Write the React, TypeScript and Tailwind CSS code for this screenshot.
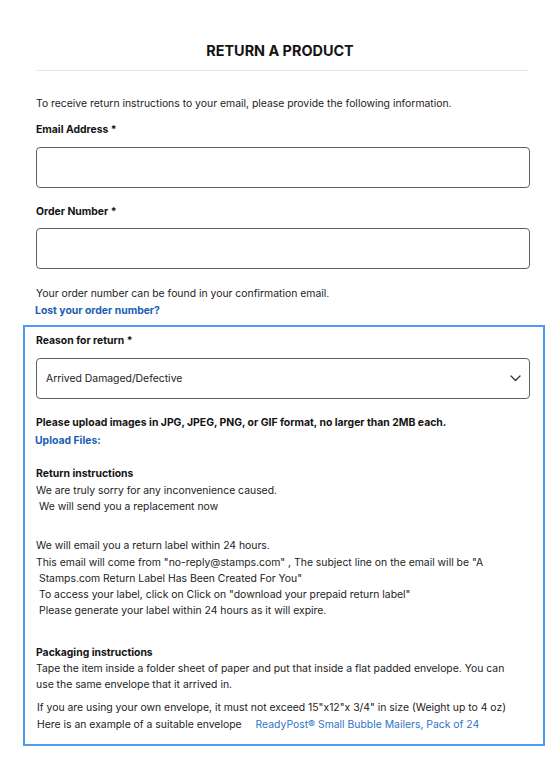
import React from "react";

const Chevron: React.FC = () => (
  <svg width="11" height="7" viewBox="0 0 11 7" fill="none">
    <polyline points="1,1 5.5,5.5 10,1" stroke="#333" strokeWidth="1.3" strokeLinecap="round" strokeLinejoin="round" />
  </svg>
);

export default function App() {
  return (
    <main className="min-h-screen bg-white font-['Inter','Liberation_Sans',sans-serif] text-[10.4px] leading-[16px] text-[#222]">
      <div className="pt-[41px] text-center">
        <h1 className="text-[14.4px] leading-[20px] font-bold text-[#141414]">RETURN A PRODUCT</h1>
      </div>

      <div className="pl-[23px] pr-[15px]">
        <div className="pl-[13px] pr-[15px] leading-[17px]">
          <div className="mt-[9px] h-px bg-[#e8e8e8] mr-[2px]" />

          <p className="mt-[24px]">To receive return instructions to your email, please provide the following information.</p>

          <label className="block mt-[9px] font-bold text-[#141414]">Email Address *</label>
          <input className="block mt-[9px] w-full h-[41px] border-[1.5px] border-[#5d645d] rounded-[4px] outline-none" type="text" />

          <label className="block mt-[15px] font-bold text-[#141414]">Order Number *</label>
          <input className="block mt-[8px] w-full h-[41px] border-[1.5px] border-[#5d645d] rounded-[4px] outline-none" type="text" />

          <p className="mt-[16px]">Your order number can be found in your confirmation email.</p>
          <a className="block font-bold text-[#1b5eb5] -ml-[1px]">Lost your order number?</a>
        </div>

        <div className="mt-[6px] border-2 border-[#4b9bf3] pl-[11px] pr-[13px] pt-[5px] pb-[11px]">
          <label className="block font-bold text-[#141414] leading-[17px]">Reason for return *</label>
          <div className="mt-[9px] flex items-center justify-between h-[41px] border-[1.5px] border-[#5d645d] rounded-[4px] pl-[9px] pr-[8px]">
            <span>Arrived Damaged/Defective</span>
            <Chevron />
          </div>

          <p className="mt-[15px] font-bold text-[#141414] leading-[17px]">Please upload images in JPG, JPEG, PNG, or GIF format, no larger than 2MB each.</p>
          <a className="block mt-[1px] font-bold text-[#1b5eb5] -ml-[1px] leading-[17px]">Upload Files:</a>

          <p className="mt-[17px] font-bold text-[#141414] leading-[16.5px]">Return instructions</p>
          <p className="leading-[16.5px]">We are truly sorry for any inconvenience caused.</p>
          <p className="pl-[3px] leading-[16.5px]">We will send you a replacement now</p>

          <p className="mt-[22px]">We will email you a return label within 24 hours.</p>
          <p className="mt-[1px]">This email will come from "no-reply@stamps.com" , The subject line on the email will be "A</p>
          <p className="pl-[3px]">Stamps.com Return Label Has Been Created For You"</p>
          <p className="pl-[3px]">To access your label, click on Click on "download your prepaid return label"</p>
          <p className="pl-[3px]">Please generate your label within 24 hours as it will expire.</p>

          <p className="mt-[26px] font-bold text-[#141414]">Packaging instructions</p>
          <p className="pr-[14px]">
            Tape the item inside a folder sheet of paper and put that inside a flat padded envelope. You can use the same
            envelope that it arrived in.
          </p>

          <p className="mt-[7px] pl-[1px]">If you are using your own envelope, it must not exceed 15"x12"x 3/4" in size (Weight up to 4 oz)</p>
          <p className="pl-[1px] mt-[1px]">
            Here is an example of a suitable envelope
            <a className="ml-[14px] text-[#2f73c6]">ReadyPost® Small Bubble Mailers, Pack of 24</a>
          </p>
        </div>
      </div>
    </main>
  );
}
